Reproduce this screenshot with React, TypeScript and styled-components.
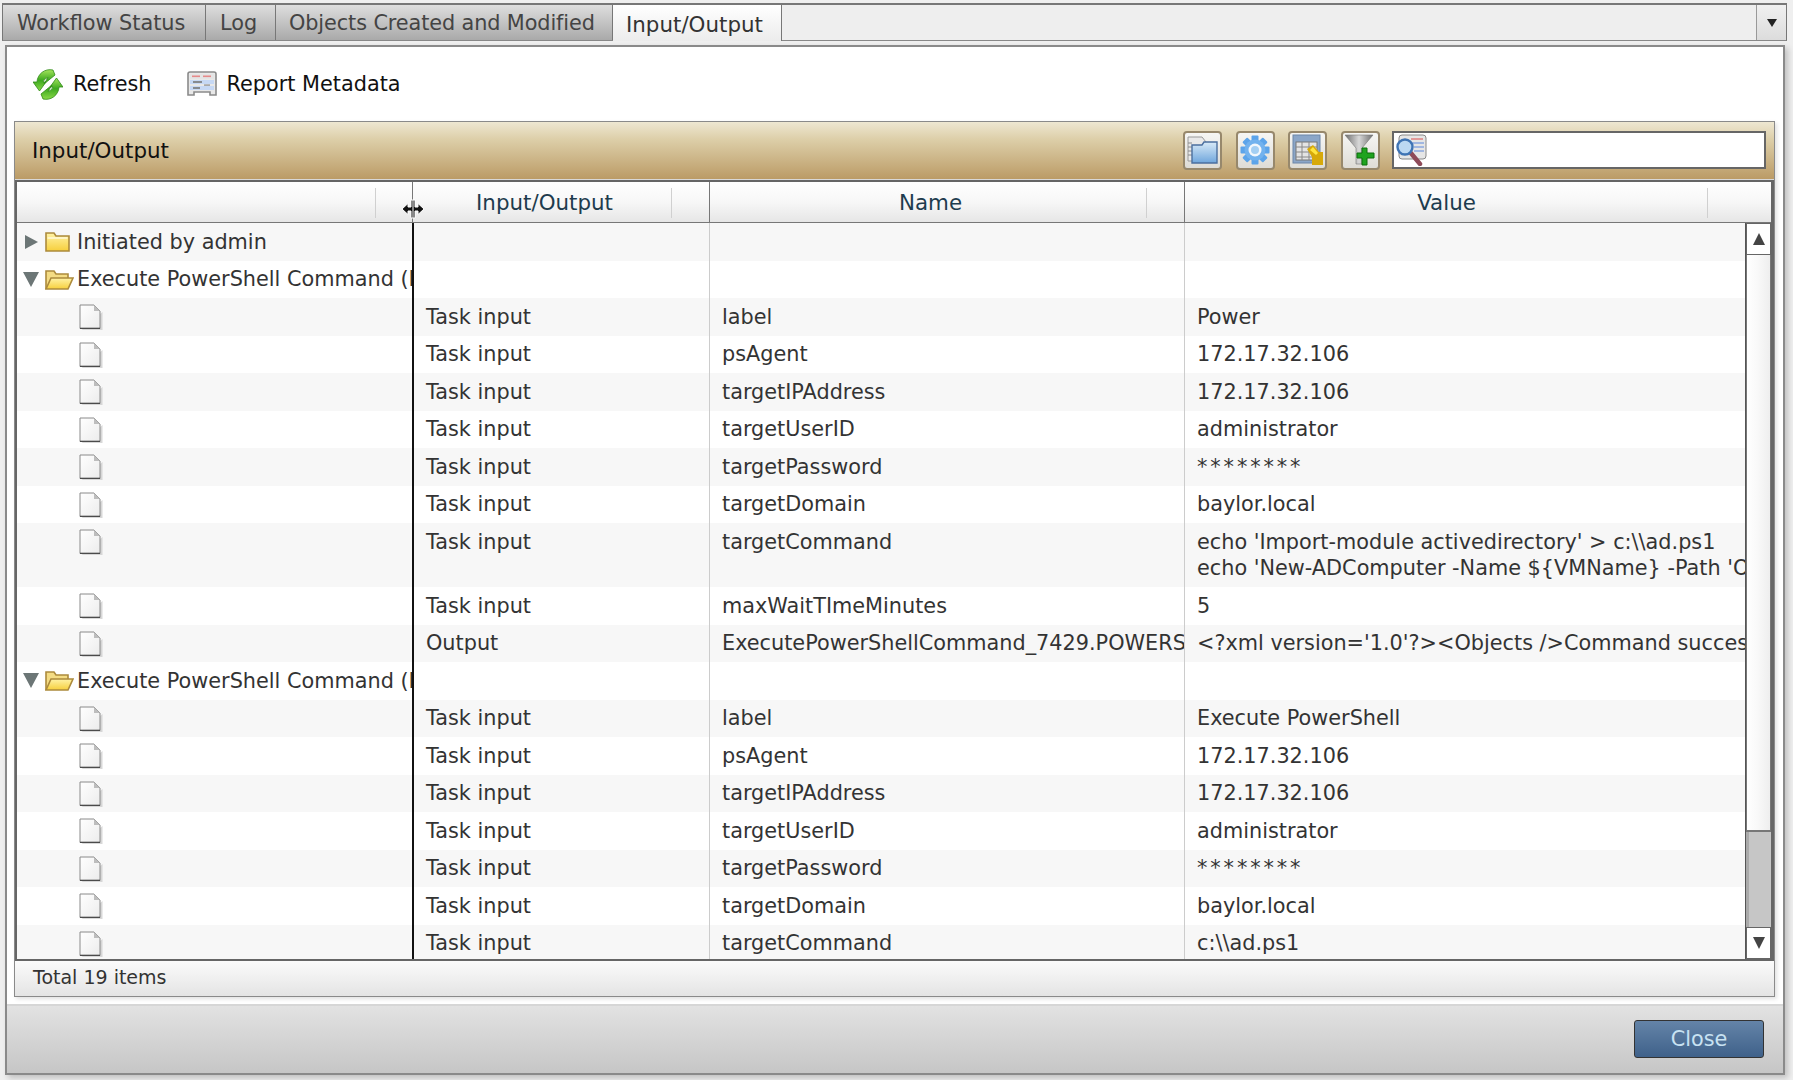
import React from "react";
import styled, { createGlobalStyle } from "styled-components";

const GlobalStyle = createGlobalStyle`
  html, body {
    margin: 0;
    height: 1080px;
    overflow: hidden;
    background: #efefef;
    font-family: "DejaVu Sans", "Liberation Sans", sans-serif;
    color: #333;
  }
  * { box-sizing: border-box; }
`;

// tabs
const PageSC = styled.div`
  height: 1080px;
  padding-top: 3px;
`;

const TabStripSC = styled.div`
  display: flex;
  height: 38px;
  margin: 0 6px 0 2px;
  background: #eee;
  border: 1px solid #777;
  border-top-width: 2px;
  border-bottom-color: #888;
`;

const TabSC = styled.div<{ $active?: boolean; $width: number; $tight?: boolean }>`
  width: ${(p) => p.$width}px;
  display: flex;
  align-items: center;
  padding-left: ${(p) => (p.$active || p.$tight ? 13 : 14)}px;
  padding-top: ${(p) => (p.$active ? 3 : 0)}px;
  font-size: ${(p) => (p.$active ? 21.4 : 20.8)}px;
  letter-spacing: ${(p) => (p.$tight ? "-0.1px" : "normal")};
  white-space: nowrap;
  color: ${(p) => (p.$active ? "#333" : "#444")};
  background: ${(p) => (p.$active ? "linear-gradient(#fff, #ececec)" : "linear-gradient(#dedede, #a9a9a9)")};
  border-right: 1px solid #777;
  margin-bottom: ${(p) => (p.$active ? "-1px" : "0")};
`;

const TabFillerSC = styled.div`
  flex: 1;
`;

const TabMenuSC = styled.div`
  width: 30px;
  display: flex;
  align-items: center;
  justify-content: center;
  background: linear-gradient(#f0f0f0, #dcdcdc);
  border-left: 1px solid #999;
  &::after {
    content: "";
    border-left: 5px solid transparent;
    border-right: 5px solid transparent;
    border-top: 8px solid #222;
  }
`;

// window
const WindowSC = styled.div`
  height: 1030px;
  margin: 4px 8px 0 5px;
  background: #fff;
  border: 2px solid #8a8a8a;
  box-shadow: 3px 3px 6px rgba(0, 0, 0, 0.2);
  display: flex;
  flex-direction: column;
`;

const ToolbarSC = styled.div`
  height: 74px;
  display: flex;
  align-items: center;
  padding-left: 26px;
  flex: none;
`;

const ToolItemSC = styled.div`
  display: flex;
  align-items: center;
  gap: 10px;
  font-size: 20.8px;
  color: #111;
  margin-right: 35px;
`;

const PanelSC = styled.div`
  height: 876px;
  margin: 0 8px 0 7px;
  flex: none;
  border: 1px solid #8a8a8a;
  display: flex;
  flex-direction: column;
  background: #d8d8d8;
  box-shadow: 2px 2px 4px rgba(0, 0, 0, 0.12);
`;

const TitleBarSC = styled.div`
  height: 57px;
  flex: none;
  display: flex;
  align-items: center;
  padding: 0 8px 1px 17px;
  background: linear-gradient(#eee7d2, #ddcfa9 30%, #bb9b66);
`;

const PanelTitleSC = styled.div`
  font-size: 21.4px;
  color: #111;
  flex: 1;
`;

const IconButtonSC = styled.div`
  width: 39px;
  height: 39px;
  margin-right: 13.5px;
  border: 2px solid #97886c;
  border-radius: 4px;
  background: linear-gradient(#f6f6f4, #dedcd6);
  display: flex;
  align-items: center;
  justify-content: center;
`;

const SearchBoxSC = styled.div`
  width: 374px;
  height: 38px;
  margin-left: -1px;
  background: #fff;
  border: 2px solid #666;
  display: flex;
  align-items: center;
  padding-left: 2px;
`;

// grid
const GridSC = styled.div`
  height: 781px;
  margin-top: 1px;
  flex: none;
  background: #fff;
  border: 2px solid #666;
  border-right-width: 3px;
  display: flex;
  flex-direction: column;
  position: relative;
`;

const GridHeaderSC = styled.div`
  height: 41px;
  flex: none;
  display: grid;
  grid-template-columns: 395px 297px 475px 1fr;
  background: linear-gradient(#fff, #f7f7f7 50%, #e6e6e6);
  border-bottom: 1px solid #777;
`;

const HeaderCellSC = styled.div<{ $first?: boolean; $sep: number; $nudge?: number }>`
  position: relative;
  display: flex;
  align-items: center;
  justify-content: center;
  padding: 1px ${(p) => p.$nudge ?? p.$sep}px 0 0;
  font-size: 21.4px;
  color: #1e3c4e;
  border-left: ${(p) => (p.$first ? "none" : "1px solid #777")};
  &::after {
    content: "";
    position: absolute;
    top: 6px;
    bottom: 4px;
    right: ${(p) => p.$sep}px;
    width: 1px;
    background: #d0d0d0;
  }
`;

const GridBodySC = styled.div`
  flex: 1;
  min-height: 0;
  display: flex;
`;

const RowsSC = styled.div`
  flex: 1;
  min-width: 0;
  overflow: hidden;
`;

const RowSC = styled.div<{ $odd: boolean; $tall?: boolean }>`
  height: ${(p) => (p.$tall ? 64 : 37.5)}px;
  display: grid;
  grid-template-columns: 395px 297px 475px 1fr;
  background: ${(p) => (p.$odd ? "#f7f7f7" : "#fff")};
`;

const TreeCellSC = styled.div<{ $leaf?: boolean }>`
  display: flex;
  align-items: ${(p) => (p.$leaf ? "flex-start" : "center")};
  padding: ${(p) => (p.$leaf ? "6px 0 0 62px" : "0 0 0 6px")};
  overflow: hidden;
  white-space: nowrap;
  font-size: 20.8px;
  color: #333;
  svg {
    flex: none;
  }
`;

const ArrowRightSC = styled.div`
  flex: none;
  width: 14px;
  margin: 0 6px 0 2px;
  border-left: 13px solid #6c7676;
  border-top: 7px solid transparent;
  border-bottom: 7px solid transparent;
  height: 0;
`;

const ArrowDownSC = styled.div`
  flex: none;
  width: 0;
  margin: 0 6px 0 0;
  border-top: 15px solid #6c7676;
  border-left: 8px solid transparent;
  border-right: 8px solid transparent;
`;

const TreeLabelSC = styled.span`
  margin-left: 3px;
`;

const CellSC = styled.div<{ $divider?: "dark" | "light"; $masked?: boolean }>`
  padding: 5.5px 0 0 12px;
  font-size: 20.8px;
  line-height: 26px;
  white-space: pre;
  overflow: hidden;
  color: #333;
  letter-spacing: ${(p) => (p.$masked ? "2.9px" : "normal")};
  border-left: ${(p) => (p.$divider === "dark" ? "2px solid #111" : "1px solid #ccc")};
`;

const ScrollbarSC = styled.div`
  width: 26px;
  flex: none;
  display: flex;
  flex-direction: column;
  background: #fff;
  border-left: 1px solid #555;
`;

const ScrollButtonSC = styled.div<{ $up?: boolean }>`
  height: 32px;
  flex: none;
  display: flex;
  align-items: center;
  justify-content: center;
  background: #fff;
  border: 1px solid #666;
  &::after {
    content: "";
    border-left: 6px solid transparent;
    border-right: 6px solid transparent;
    ${(p) => (p.$up ? "border-bottom: 12px solid #444;" : "border-top: 12px solid #444;")}
  }
`;

const ThumbSC = styled.div`
  flex: 1;
  background: linear-gradient(90deg, #fff, #f9f9f9 45%, #eee);
  border-right: 1px solid #777;
  border-left: 1px solid #777;
  border-bottom: 2px solid #777;
`;

const TrackSC = styled.div`
  height: 95px;
  flex: none;
  background: #c6c6c6;
  border-left: 3px solid #aaa;
`;

const ResizeCursorSC = styled.svg`
  position: absolute;
  left: 384px;
  top: 17px;
`;

const TotalBarSC = styled.div`
  flex: 1;
  display: flex;
  align-items: center;
  padding: 0 0 4px 18px;
  font-size: 19px;
  color: #333;
  background: linear-gradient(#fbfbfb, #e4e4e4);
`;

const FooterSC = styled.div`
  margin-top: auto;
  height: 69px;
  flex: none;
  display: flex;
  align-items: center;
  justify-content: flex-end;
  padding: 0 19px 2px 0;
  background: linear-gradient(#e2e2e2, #c6c6c6);
  border-top: 2px solid #d6d6d6;
`;

const CloseButtonSC = styled.div`
  width: 130px;
  height: 38px;
  display: flex;
  align-items: center;
  justify-content: center;
  font-size: 20.8px;
  color: #c8e2f2;
  background: linear-gradient(#6484a8, #3f618a);
  border: 1px solid #333;
  border-radius: 3px;
`;

const RefreshIcon = () => (
  <svg width="30" height="31" viewBox="0 0 30 31">
    <defs>
      <linearGradient id="rf" x1="0" y1="0" x2="0" y2="1">
        <stop offset="0" stopColor="#a4e45c" />
        <stop offset="0.5" stopColor="#3da91f" />
        <stop offset="1" stopColor="#8ada48" />
      </linearGradient>
    </defs>
    <path d="M20 1 A13 13 0 0 0 4 13 L0 13 L6.5 22 L13 13 L10 13 A7 7 0 0 1 15 8.5 L11 15 L22 6 Z" fill="url(#rf)" stroke="#2f8a17" strokeWidth="0.8" />
    <path d="M10 30 A13 13 0 0 0 26 18 L30 18 L23.5 9 L17 18 L20 18 A7 7 0 0 1 15 22.5 L19 16 L8 25 Z" fill="url(#rf)" stroke="#2f8a17" strokeWidth="0.8" />
  </svg>
);

const ReportIcon = () => (
  <svg width="30" height="26" viewBox="0 0 30 26">
    <path d="M1 3 Q1 1 3 1 H27 Q29 1 29 3 V24 H23 V21 H7 V24 H1 Z" fill="#e8e8e8" stroke="#8a8a8a" strokeWidth="1.6" />
    <rect x="3" y="3" width="24" height="5" fill="#e4e4e4" />
    <rect x="5" y="4.5" width="8" height="1.6" fill="#e58a8a" />
    <rect x="16" y="4.5" width="8" height="1.6" fill="#e58a8a" />
    <rect x="3" y="9" width="24" height="4" fill="#c6d8f4" />
    <rect x="3" y="15" width="24" height="4" fill="#c6d8f4" />
    <rect x="6" y="10.2" width="9" height="1.6" fill="#777" />
    <rect x="6" y="16.2" width="7" height="1.6" fill="#777" />
    <rect x="17" y="13.4" width="6" height="1.4" fill="#999" />
  </svg>
);

const FolderButtonIcon = () => (
  <svg width="31" height="30" viewBox="0 0 31 30">
    <defs>
      <linearGradient id="fb" x1="0" y1="0" x2="0" y2="1">
        <stop offset="0" stopColor="#d8eaf8" />
        <stop offset="1" stopColor="#6fa6dc" />
      </linearGradient>
    </defs>
    <path d="M1 2 H15 L19 7 V26 H1 Z" fill="#e9e9e9" stroke="#9a9a9a" />
    <path d="M1 8 H5 M1 12 H5 M1 16 H5 M1 20 H5" stroke="#8a8a8a" />
    <path d="M5 10 H15 L17 7 H30 V28 H5 Z" fill="url(#fb)" stroke="#4b6f9f" strokeWidth="1.4" />
  </svg>
);

const GearIcon = () => (
  <svg width="30" height="30" viewBox="0 0 30 30">
    {[0, 45, 90, 135, 180, 225, 270, 315].map((a) => (
      <rect key={a} x="11.5" y="0.5" width="7" height="7" rx="1" fill="#5ca4ea" transform={`rotate(${a} 15 15)`} />
    ))}
    <circle cx="15" cy="15" r="10.5" fill="#72b2ee" />
    <circle cx="15" cy="15" r="6.5" fill="#f2f7fc" />
    <circle cx="15" cy="15" r="4" fill="#a4cff3" />
  </svg>
);

const TableKeyIcon = () => (
  <svg width="32" height="32" viewBox="0 0 32 32">
    <rect x="1" y="1" width="27" height="28" fill="#8ba6c8" stroke="#6d86a8" />
    <rect x="4" y="8" width="21" height="18" fill="#e4e4e4" stroke="#777" />
    <path d="M4 13 H25 M4 18 H25 M4 23 H25 M10 8 V26 M17 8 V26" stroke="#888" />
    <path d="M15 15 L21 11 L27 18 H31 V31 H20 V23 Z" fill="#d7a90a" />
    <path d="M21 13 L26 19 L24 21 L18 16 Z" fill="#ffe640" />
  </svg>
);

const FilterAddIcon = () => (
  <svg width="32" height="32" viewBox="0 0 32 32">
    <defs>
      <linearGradient id="fu" x1="0" y1="0" x2="1" y2="0">
        <stop offset="0" stopColor="#6e6e6e" />
        <stop offset="0.5" stopColor="#d8d8d8" />
        <stop offset="1" stopColor="#6e6e6e" />
      </linearGradient>
    </defs>
    <path d="M1 1 H29 L18 14 V30 H12 V14 Z" fill="url(#fu)" stroke="#777" strokeWidth="0.6" />
    <path d="M18 14 H23 V19 H30 V24 H23 V31 H18 V24 H13 V19 H18 Z" fill="#1fa31f" stroke="#0c6f0c" />
  </svg>
);

const SearchIcon = () => (
  <svg width="32" height="32" viewBox="0 0 32 32">
    <rect x="3" y="1" width="27" height="24" rx="3" fill="#e6e6e6" stroke="#888" />
    <path d="M15 5 H27" stroke="#e08888" strokeWidth="1.6" />
    <path d="M16 9 H28 M18 13 H28 M18 17 H28" stroke="#8aa8e0" strokeWidth="1.6" />
    <path d="M14 18 L24 30" stroke="#8e4a58" strokeWidth="4.5" strokeLinecap="round" />
    <circle cx="9" cy="13" r="7.5" fill="#bcd8f2" stroke="#3f74b4" strokeWidth="2.4" />
  </svg>
);

const FolderIcon = ({ open }: { open: boolean }) => (
  <svg width="29" height="23" viewBox="0 0 29 23">
    <defs>
      <linearGradient id="fd" x1="0" y1="0" x2="0" y2="1">
        <stop offset="0" stopColor="#fff3a6" />
        <stop offset="1" stopColor="#f6cf3c" />
      </linearGradient>
    </defs>
    {open ? (
      <>
        <path d="M1 21 V3 H9 L11 6 H23 V10" fill="#f4dc84" stroke="#ac8a3c" strokeWidth="1.6" />
        <path d="M1 21 L6 10 H28 L23 21 Z" fill="url(#fd)" stroke="#ac8a3c" strokeWidth="1.6" />
      </>
    ) : (
      <>
        <path d="M1 3 H9 L11 6 H24 V21 H1 Z" fill="url(#fd)" stroke="#ac8a3c" strokeWidth="1.6" />
        <path d="M2.5 8 H22.5" stroke="#fffbe0" strokeWidth="1.4" />
      </>
    )}
  </svg>
);

const DocIcon = () => (
  <svg width="24" height="27" viewBox="0 0 24 27">
    <defs>
      <linearGradient id="dc" x1="0" y1="0" x2="1" y2="1">
        <stop offset="0" stopColor="#fff" />
        <stop offset="1" stopColor="#ececec" />
      </linearGradient>
    </defs>
    <path d="M2.5 26 H23.5 V8 Z" fill="#c8c8c8" opacity="0.7" />
    <path d="M1 1 H15 L21 7 V24.5 H1 Z" fill="url(#dc)" stroke="#8a8a8a" strokeWidth="1" />
    <path d="M15 1 V7 H21 Z" fill="#bdbdbd" />
    <path d="M1 24.3 H21" stroke="#444" strokeWidth="1.2" />
  </svg>
);

type RowData = { folder?: "open" | "closed"; label?: string; io?: string; name?: string; value?: string; tall?: boolean };

const taskRows = (label: string, last: string): RowData[] => [
  { io: "Task input", name: "label", value: label },
  { io: "Task input", name: "psAgent", value: "172.17.32.106" },
  { io: "Task input", name: "targetIPAddress", value: "172.17.32.106" },
  { io: "Task input", name: "targetUserID", value: "administrator" },
  { io: "Task input", name: "targetPassword", value: "********" },
  { io: "Task input", name: "targetDomain", value: "baylor.local" },
  { io: "Task input", name: "targetCommand", value: last, tall: last.includes("\n") },
];

const rows: RowData[] = [
  { folder: "closed", label: "Initiated by admin" },
  { folder: "open", label: "Execute PowerShell Command (PowerShell)" },
  ...taskRows("Power", "echo 'Import-module activedirectory' > c:\\\\ad.ps1\necho 'New-ADComputer -Name ${VMName} -Path 'OU=Computers,DC=baylor,DC=local'"),
  { io: "Task input", name: "maxWaitTImeMinutes", value: "5" },
  { io: "Output", name: "ExecutePowerShellCommand_7429.POWERSHELL_OUTPUT", value: "<?xml version='1.0'?><Objects />Command successful" },
  { folder: "open", label: "Execute PowerShell Command (PowerShell)" },
  ...taskRows("Execute PowerShell", "c:\\\\ad.ps1"),
];

function App(): JSX.Element {
  return (
    <PageSC>
      <GlobalStyle />
      <TabStripSC>
        <TabSC $width={203}>Workflow Status</TabSC>
        <TabSC $width={70}>Log</TabSC>
        <TabSC $width={337} $tight>
          Objects Created and Modified
        </TabSC>
        <TabSC $width={169} $active>
          Input/Output
        </TabSC>
        <TabFillerSC />
        <TabMenuSC />
      </TabStripSC>
      <WindowSC>
        <ToolbarSC>
          <ToolItemSC>
            <RefreshIcon />
            Refresh
          </ToolItemSC>
          <ToolItemSC>
            <ReportIcon />
            Report Metadata
          </ToolItemSC>
        </ToolbarSC>
        <PanelSC>
          <TitleBarSC>
            <PanelTitleSC>Input/Output</PanelTitleSC>
            <IconButtonSC>
              <FolderButtonIcon />
            </IconButtonSC>
            <IconButtonSC>
              <GearIcon />
            </IconButtonSC>
            <IconButtonSC>
              <TableKeyIcon />
            </IconButtonSC>
            <IconButtonSC>
              <FilterAddIcon />
            </IconButtonSC>
            <SearchBoxSC>
              <SearchIcon />
            </SearchBoxSC>
          </TitleBarSC>
          <GridSC>
            <GridHeaderSC>
              <HeaderCellSC $first $sep={36} />
              <HeaderCellSC $sep={37} $nudge={33}>
                Input/Output
              </HeaderCellSC>
              <HeaderCellSC $sep={37} $nudge={33}>
                Name
              </HeaderCellSC>
              <HeaderCellSC $sep={63}>Value</HeaderCellSC>
            </GridHeaderSC>
            <GridBodySC>
              <RowsSC>
                {rows.map((row, i) => (
                  <RowSC key={i} $odd={i % 2 === 0} $tall={row.tall}>
                    {row.folder ? (
                      <TreeCellSC>
                        {row.folder === "closed" ? <ArrowRightSC /> : <ArrowDownSC />}
                        <FolderIcon open={row.folder === "open"} />
                        <TreeLabelSC>{row.label}</TreeLabelSC>
                      </TreeCellSC>
                    ) : (
                      <TreeCellSC $leaf>
                        <DocIcon />
                      </TreeCellSC>
                    )}
                    <CellSC $divider="dark">{row.io}</CellSC>
                    <CellSC>{row.name}</CellSC>
                    <CellSC $masked={row.value === "********"}>{row.value}</CellSC>
                  </RowSC>
                ))}
              </RowsSC>
              <ScrollbarSC>
                <ScrollButtonSC $up />
                <ThumbSC />
                <TrackSC />
                <ScrollButtonSC />
              </ScrollbarSC>
            </GridBodySC>
            <ResizeCursorSC width="24" height="20" viewBox="0 0 24 20">
              <path d="M1 10 L7 4.5 V8 H10 V1 H14 V8 H17 V4.5 L23 10 L17 15.5 V12 H14 V19 H10 V12 H7 V15.5 Z" fill="#111" stroke="#fff" strokeWidth="1" />
              <path d="M12 1 V19" stroke="#fff" strokeWidth="1" />
            </ResizeCursorSC>
          </GridSC>
          <TotalBarSC>Total 19 items</TotalBarSC>
        </PanelSC>
        <FooterSC>
          <CloseButtonSC>Close</CloseButtonSC>
        </FooterSC>
      </WindowSC>
    </PageSC>
  );
}

export default App;
